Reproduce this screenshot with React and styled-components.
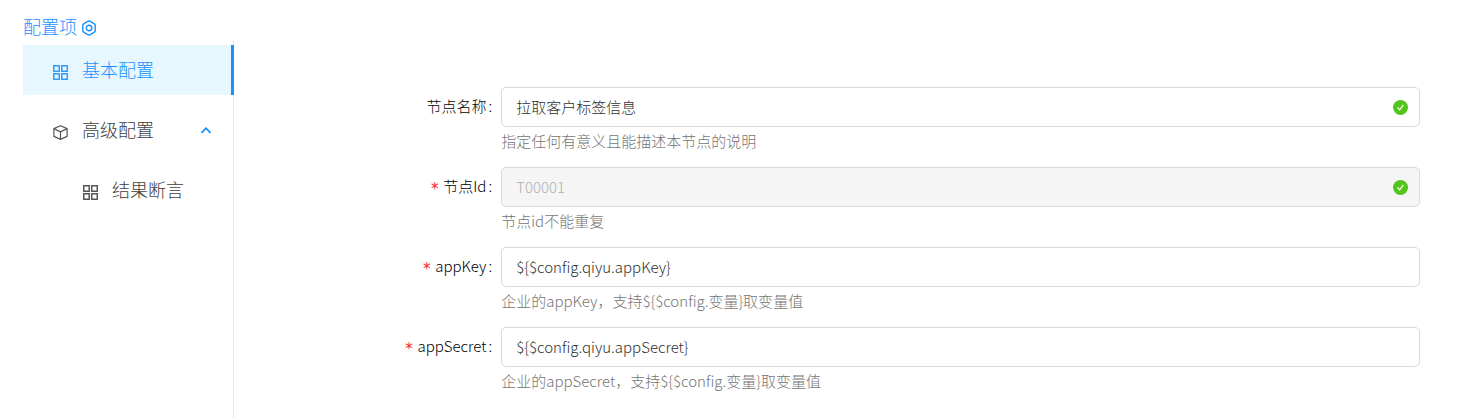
import React, { useState } from "react";
import styled, { createGlobalStyle } from "styled-components";

const GlobalStyle = createGlobalStyle`
  *, *::before, *::after { box-sizing: border-box; }
  body {
    margin: 0;
    background: #fff;
    color: #404040;
    font-family: "Noto Sans CJK SC", sans-serif;
    font-size: 15px;
    font-weight: 300;
  }
`;

/* ==== Layout ==== */
const Page = styled.div`
  min-height: 100vh;
  display: flex;
  padding-left: 23px;
`;

const Sidebar = styled.aside`
  flex: none;
  width: 211px;
  display: flex;
  flex-direction: column;
`;

const Heading = styled.h1`
  display: flex;
  align-items: center;
  gap: 4px;
  height: 40px;
  margin: 0;
  padding-top: 12px;
  color: #1890ff;
  font-size: 18px;
  font-weight: 300;
  line-height: 24px;
`;

const Menu = styled.nav`
  flex: 1;
  display: flex;
  flex-direction: column;
  gap: 10px;
  padding-top: 5px;
  border-right: 1px solid #e8e8e8;
`;

const MenuItem = styled.button`
  display: flex;
  align-items: center;
  gap: 14px;
  height: 50px;
  margin-right: -1px;
  padding: 0 19px 0 ${(p) => (p.$nested ? 60 : 30)}px;
  border: 0;
  border-right: 3px solid ${(p) => (p.$active ? "#1890ff" : "transparent")};
  background: ${(p) => (p.$active ? "#e6f7ff" : "transparent")};
  color: ${(p) => (p.$active ? "#1890ff" : "#404040")};
  font: inherit;
  font-size: 18px;
  text-align: left;
  cursor: pointer;
  &:hover { color: #1890ff; }
`;

const MenuText = styled.span`
  flex: 1;
  padding-bottom: 2px;
`;

const Icon = styled.svg`
  flex: none;
  display: block;
  width: 15px;
  height: 15px;
`;

const ItemIcon = styled(Icon)`
  margin-top: 5px;
  opacity: 0.88;
`;

const TitleIcon = styled(Icon)`
  width: 16px;
  height: 16px;
  margin-top: 4px;
`;

const Arrow = styled(Icon)`
  width: 12px;
  height: 12px;
  color: #1890ff;
`;

/* ==== Form ==== */
const Form = styled.form`
  flex: 1;
  min-width: 0;
  padding: 87px 9px 0 12px;
`;

const Field = styled.div`
  display: grid;
  grid-template-columns: 5fr 18fr 1fr;
  height: 80px;
`;

const Label = styled.label`
  padding-right: 9px;
  color: #000;
  line-height: 38px;
  text-align: right;
  white-space: nowrap;
  &::after { content: ":"; margin-left: 2px; }
`;

const Required = styled.span`
  margin-right: 4px;
  color: #f5222d;
  font-family: "DejaVu Sans Mono", monospace;
  line-height: 1;
  vertical-align: -2px;
`;

const InputBox = styled.div`
  display: flex;
  align-items: center;
  height: 40px;
  padding-right: 11px;
  border: 1px solid #d9d9d9;
  border-radius: 5px;
  background: ${(p) => (p.$disabled ? "#f5f5f5" : "#fff")};
  &:focus-within { border-color: #40a9ff; }
`;

const Input = styled.input`
  flex: 1;
  min-width: 0;
  height: 38px;
  padding: 0 14px 1px;
  border: 0;
  outline: none;
  background: transparent;
  color: #303030;
  font: inherit;
  &:disabled { color: #b0b0b0; }
`;

const Help = styled.div`
  color: #757575;
  line-height: 28px;
`;

/* ==== Icons ==== */
const NutIcon = () => (
  <TitleIcon viewBox="0 0 16 16" fill="none" stroke="currentColor" strokeWidth="1.4" strokeLinejoin="round" aria-hidden="true">
    <path d="M8 0.9l1.2.4 4.2 2.5.8 1.2v6l-.8 1.2-4.2 2.5-1.2.4-1.2-.4-4.2-2.5-.8-1.2V5l.8-1.2 4.2-2.5z" />
    <circle cx="8" cy="8" r="2.8" />
  </TitleIcon>
);

const GridIcon = () => (
  <ItemIcon viewBox="0 0 15 15" fill="none" stroke="currentColor" strokeWidth="1.5" aria-hidden="true">
    <rect x="0.75" y="0.75" width="5.5" height="5.5" />
    <rect x="8.75" y="0.75" width="5.5" height="5.5" />
    <rect x="0.75" y="8.75" width="5.5" height="5.5" />
    <rect x="8.75" y="8.75" width="5.5" height="5.5" />
  </ItemIcon>
);

const CubeIcon = () => (
  <ItemIcon viewBox="0 0 15 15" fill="none" stroke="currentColor" strokeWidth="1.2" strokeLinejoin="round" aria-hidden="true">
    <path d="M7.5 0.7l6.6 2.9v7.8l-6.6 3-6.6-3V3.6z" />
    <path d="M0.9 3.6l6.6 3.3 6.6-3.3M7.5 6.9v7.5" />
  </ItemIcon>
);

const ArrowIcon = ({ open }) => (
  <Arrow viewBox="0 0 12 12" fill="none" stroke="currentColor" strokeWidth="1.8" aria-hidden="true">
    <path d={open ? "M1.5 8.8L6 4.2l4.5 4.6" : "M1.5 4L6 8.6 10.5 4"} />
  </Arrow>
);

const CheckIcon = () => (
  <Icon viewBox="0 0 15 15" aria-hidden="true">
    <circle cx="7.5" cy="7.5" r="7.5" fill="#52c41a" />
    <path d="M4.5 7.3l2.2 2.6 3.7-5" fill="none" stroke="#fff" strokeWidth="1.2" />
  </Icon>
);

const FIELDS = [
  { id: "name", label: "节点名称", help: "指定任何有意义且能描述本节点的说明", valid: true },
  { id: "nodeId", label: "节点Id", help: "节点id不能重复", required: true, disabled: true, valid: true },
  { id: "appKey", label: "appKey", help: "企业的appKey，支持${$config.变量}取变量值", required: true },
  { id: "appSecret", label: "appSecret", help: "企业的appSecret，支持${$config.变量}取变量值", required: true },
];

export default function App() {
  const [active, setActive] = useState("basic");
  const [open, setOpen] = useState(true);
  const [values, setValues] = useState({
    name: "拉取客户标签信息",
    nodeId: "T00001",
    appKey: "${$config.qiyu.appKey}",
    appSecret: "${$config.qiyu.appSecret}",
  });

  const change = (e) => {
    const { id, value } = e.target;
    setValues((v) => ({ ...v, [id]: value }));
  };

  return (
    <>
      <GlobalStyle />
      <Page>
        <Sidebar>
          <Heading>配置项 <NutIcon /></Heading>
          <Menu>
            <MenuItem type="button" $active={active === "basic"} onClick={() => setActive("basic")}>
              <GridIcon />
              <MenuText>基本配置</MenuText>
            </MenuItem>
            <MenuItem type="button" aria-expanded={open} onClick={() => setOpen(!open)}>
              <CubeIcon />
              <MenuText>高级配置</MenuText>
              <ArrowIcon open={open} />
            </MenuItem>
            {open && (
              <MenuItem type="button" $nested $active={active === "assert"} onClick={() => setActive("assert")}>
                <GridIcon />
                <MenuText>结果断言</MenuText>
              </MenuItem>
            )}
          </Menu>
        </Sidebar>

        <Form onSubmit={(e) => e.preventDefault()}>
          {FIELDS.map((f) => (
            <Field key={f.id}>
              <Label htmlFor={f.id}>
                {f.required && <Required>*</Required>}
                {f.label}
              </Label>
              <div>
                <InputBox $disabled={f.disabled}>
                  <Input
                    id={f.id}
                    type="text"
                    value={values[f.id]}
                    onChange={change}
                    disabled={f.disabled}
                    required={f.required}
                    aria-describedby={`${f.id}-help`}
                    autoComplete="off"
                  />
                  {f.valid && <CheckIcon />}
                </InputBox>
                <Help id={`${f.id}-help`}>{f.help}</Help>
              </div>
            </Field>
          ))}
        </Form>
      </Page>
    </>
  );
}
